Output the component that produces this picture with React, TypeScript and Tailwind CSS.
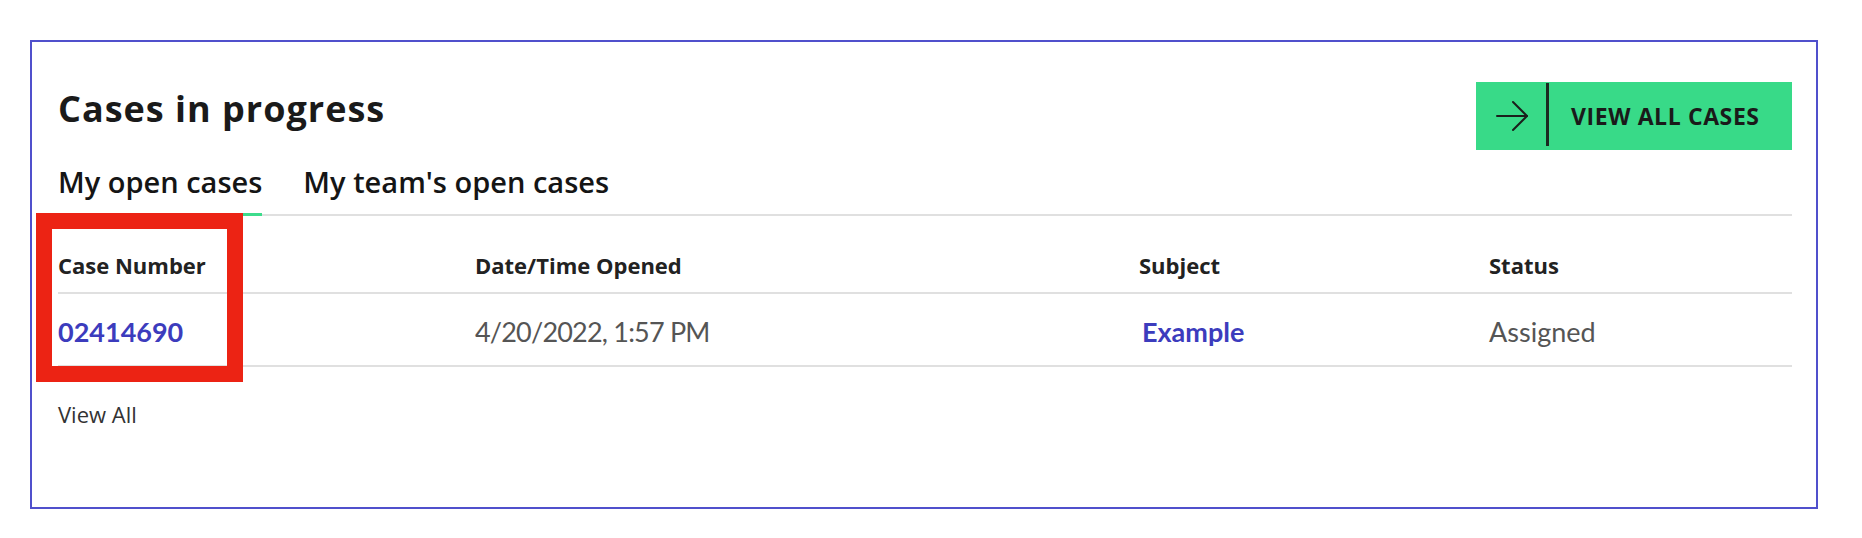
import { useState } from 'react'

// Filas de casos abiertos
const cases = [
  { number: '02414690', opened: '4/20/2022, 1:57 PM', subject: 'Example', status: 'Assigned' },
]

const tabs = ['My open cases', "My team's open cases"]

function ArrowIcon() {
  return (
    <svg width="32" height="32" viewBox="0 0 32 32" fill="none" stroke="#1b1f1c" strokeWidth="2" strokeLinecap="round" strokeLinejoin="round">
      <path d="M1 16h30" />
      <path d="M17 2l14 14-14 14" />
    </svg>
  )
}

export default function App() {
  const [tab, setTab] = useState(0)

  return (
    <div className="min-h-screen bg-white pt-[40px] pl-[30px] font-['Open_Sans',sans-serif]">
      <section className="relative w-[1788px] h-[469px] border-2 border-[#5050cc] px-[26px] pr-[24px] pt-[40px]">
        {/* Encabezado con título y botón */}
        <div className="flex items-start justify-between">
          <h2 className="mt-[6px] text-[36px] leading-[42px] font-bold tracking-[1px] text-[#1a1a1a]">Cases in progress</h2>
          <button className="flex items-center h-[68px] w-[316px] bg-[#38da88]">
            <span className="ml-[20px] flex"><ArrowIcon /></span>
            <span className="ml-[18px] w-[3px] h-[63px] -mt-[3px] bg-[#1b2a21]" />
            <span className="ml-[22px] text-[23px] font-bold tracking-[0.6px] text-[#1a1a1a]">VIEW ALL CASES</span>
          </button>
        </div>

        {/* Pestañas */}
        <div className="mt-[14px] flex gap-[41px] border-b-2 border-[#e0e0e0]">
          {tabs.map((t, i) => (
            <button
              key={t}
              onClick={() => setTab(i)}
              className={i === tab
                ? 'pb-[13px] text-[29px] leading-[36px] font-semibold text-[#151515] border-b-[3px] border-[#3ddc8c] -mb-[2px]'
                : 'pb-[13px] text-[29px] leading-[36px] font-semibold text-[#151515] border-b-[3px] border-transparent -mb-[2px]'}
            >
              {t}
            </button>
          ))}
        </div>

        {/* Tabla de casos */}
        <div className="grid grid-cols-[417px_664px_350px_1fr] border-b-2 border-[#e0e0e0] pt-[36px] pb-[14px] text-[22px] leading-[26px] font-bold text-[#222]">
          <div>Case Number</div>
          <div>Date/Time Opened</div>
          <div>Subject</div>
          <div>Status</div>
        </div>
        {cases.map((c) => (
          <div key={c.number} className="grid grid-cols-[417px_664px_350px_1fr] border-b-2 border-[#e0e0e0] pt-[22px] pb-[17px] text-[27px] leading-[32px] font-['Lato',sans-serif]">
            <a className="font-bold text-[#3c3cbd]">{c.number}</a>
            <div className="text-[#555] tracking-[-0.8px]">{c.opened}</div>
            <a className="font-bold text-[#3c3cbd] pl-[3px]">{c.subject}</a>
            <div className="text-[#555]">{c.status}</div>
          </div>
        ))}
        <div className="mt-[34px] text-[22px] leading-[26px] text-[#333]">View All</div>

        {/* Recuadro rojo de anotación */}
        <div className="absolute left-[4px] top-[171px] w-[207px] h-[169px] border-[16px] border-[#ec2314]" />
      </section>
    </div>
  )
}
